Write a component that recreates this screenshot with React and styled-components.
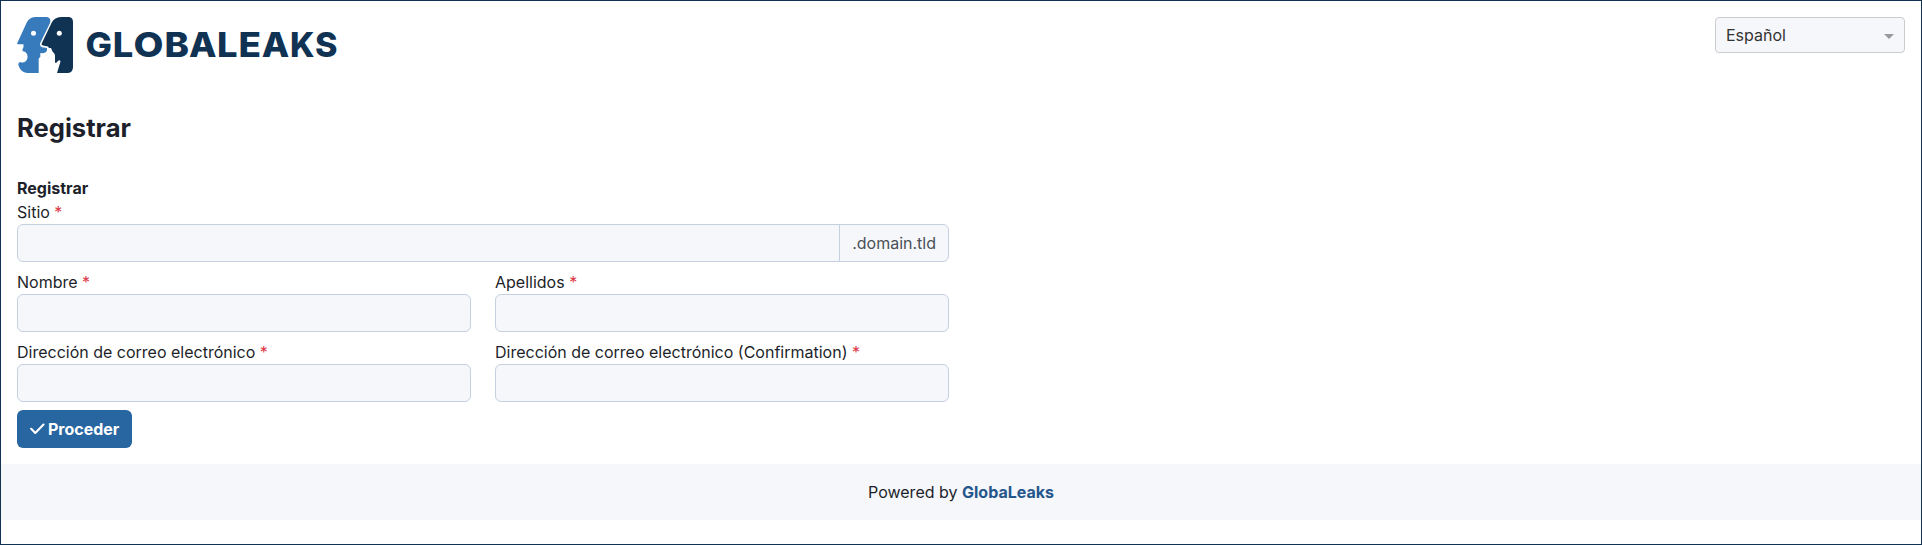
import React from "react";
import styled, { createGlobalStyle } from "styled-components";

const GlobalStyle = createGlobalStyle`
  *, *::before, *::after { box-sizing: border-box; }
  body {
    margin: 0;
    background: #fff;
    color: #1d1f2a;
    font: 400 16px/24px Inter, "Liberation Sans", sans-serif;
  }
`;

const Page = styled.div`
  display: flex;
  flex-direction: column;
  min-height: 100vh;
  border: 1px solid #103253;
`;

const Header = styled.header`
  display: flex;
  justify-content: space-between;
  align-items: flex-start;
  padding: 16px 16px 0;
`;

const LogoSvg = styled.svg`
  display: block;
`;

const LanguageSelect = styled.button`
  display: flex;
  align-items: center;
  justify-content: space-between;
  width: 190px;
  height: 36px;
  padding: 0 10px;
  border: 1px solid #ccc;
  border-radius: 4px;
  background: #f5f7fb;
  color: #333;
  font: inherit;
`;

const Caret = styled.span`
  border: 5px solid transparent;
  border-top-color: #999;
  border-bottom-width: 0;
  margin-top: 3px;
`;

const Main = styled.main`
  padding: 39px 16px 16px;
`;

const Title = styled.h1`
  margin: 0 0 32px;
  font-size: 25.6px;
  line-height: 32px;
  font-weight: 700;
`;

const Form = styled.form`
  width: calc(50% - 12px);
`;

const SectionTitle = styled.div`
  font-weight: 700;
`;

const FieldGrid = styled.div`
  display: grid;
  grid-template-columns: 1fr 1fr;
  gap: 8px 24px;
`;

const FieldBox = styled.label`
  display: block;
  grid-column: ${(p) => (p.$wide ? "1 / -1" : "auto")};
`;

const LabelText = styled.span`
  display: block;
`;

const Required = styled.span`
  color: #dc3545;
`;

const InputGroup = styled.span`
  display: flex;
`;

const Input = styled.input`
  flex: 1;
  min-width: 0;
  height: 38px;
  padding: 6px 12px;
  border: 1px solid #c5d0e0;
  border-radius: ${(p) => (p.$joined ? "6px 0 0 6px" : "6px")};
  background: #f5f7fb;
  font: inherit;
`;

const Suffix = styled.span`
  height: 38px;
  margin-left: -1px;
  padding: 6px 12px;
  border: 1px solid #c5d0e0;
  border-radius: 0 6px 6px 0;
  background: #f5f7fb;
  color: #495057;
`;

const SubmitButton = styled.button`
  display: flex;
  align-items: center;
  gap: 3px;
  height: 38px;
  margin-top: 8px;
  padding: 0 13px;
  border: 0;
  border-radius: 6px;
  background: #2866a2;
  color: #fff;
  font: inherit;
  font-weight: 700;
`;

const Footer = styled.footer`
  height: 56px;
  padding: 16px;
  background: #f5f7fb;
  text-align: center;
`;

const FooterLink = styled.a`
  color: #24568b;
  font-weight: 700;
`;

const wordmark = [
  ["G", 68.5, 26.5],
  ["L", 95.8, 20.5],
  ["O", 116.5, 30],
  ["B", 147.5, 24.5],
  ["A", 172, 27.5],
  ["L", 200, 20.5],
  ["E", 221.4, 22.5],
  ["A", 244.7, 27.5],
  ["K", 273, 24.5],
  ["S", 298, 22.5],
];

function Logo() {
  return (
    <LogoSvg width="322" height="56" viewBox="0 0 322 56" role="img" aria-label="GlobaLeaks">
      <path
        fill="#377bbc"
        d="M18 0H30Q34.5 1 33 6L23 26.5Q22.5 29 25 30.2L30 31V33.5L28.8 35.2Q26 36.500 23.300 36V40L21.700 41.500V56H10Q4 55.500 1.500 48.500Q1 45.500 3 45Q6 46.500 9 44Q11.500 41 10 37Q9 34.500 5.500 34V32.500L6.500 30V27.300H1Q0 27.300 .2 26.300L9.500 6Q12 .5 18 0Z"
      />
      <path
        fill="#103253"
        d="M44 0H52Q56 .5 56 5V50Q56 55.500 51 56H40L43.500 44.500Q43 42.500 41.500 43.500L39 46L38 45.500V38Q37.500 36 35.500 34.500L34 31H32L31 29.500L26 28.500Q24 28 24.700 26.500L34.500 6Q37 .5 44 0Z"
      />
      <circle cx="16.500" cy="16.300" r="2.500" fill="#fff" />
      <circle cx="42.300" cy="16.300" r="2.500" fill="#fff" />
      <g fill="#103253" fontFamily="Inter, sans-serif" fontSize="34.4" fontWeight="800">
        {wordmark.map(([letter, x, width]) => (
          <text key={x} x={x} y="40" textLength={width} lengthAdjust="spacingAndGlyphs">
            {letter}
          </text>
        ))}
      </g>
    </LogoSvg>
  );
}

function Field({ label, wide, suffix }) {
  return (
    <FieldBox $wide={wide}>
      <LabelText>
        {label} <Required>*</Required>
      </LabelText>
      <InputGroup>
        <Input type="text" $joined={Boolean(suffix)} />
        {suffix && <Suffix>{suffix}</Suffix>}
      </InputGroup>
    </FieldBox>
  );
}

export default function App() {
  return (
    <Page>
      <GlobalStyle />
      <Header>
        <Logo />
        <LanguageSelect type="button">
          Español
          <Caret />
        </LanguageSelect>
      </Header>
      <Main>
        <Title>Registrar</Title>
        <Form>
          <SectionTitle>Registrar</SectionTitle>
          <FieldGrid>
            <Field label="Sitio" wide suffix=".domain.tld" />
            <Field label="Nombre" />
            <Field label="Apellidos" />
            <Field label="Dirección de correo electrónico" />
            <Field label="Dirección de correo electrónico (Confirmation)" />
          </FieldGrid>
          <SubmitButton type="button">
            <svg width="15" height="12" viewBox="0 0 15 12" fill="none" aria-hidden="true">
              <path d="M1.200 5.800L5.300 10L13.500 1.600" stroke="#fff" strokeWidth="2.100" strokeLinecap="round" strokeLinejoin="round" />
            </svg>
            Proceder
          </SubmitButton>
        </Form>
      </Main>
      <Footer>
        Powered by <FooterLink>GlobaLeaks</FooterLink>
      </Footer>
    </Page>
  );
}
